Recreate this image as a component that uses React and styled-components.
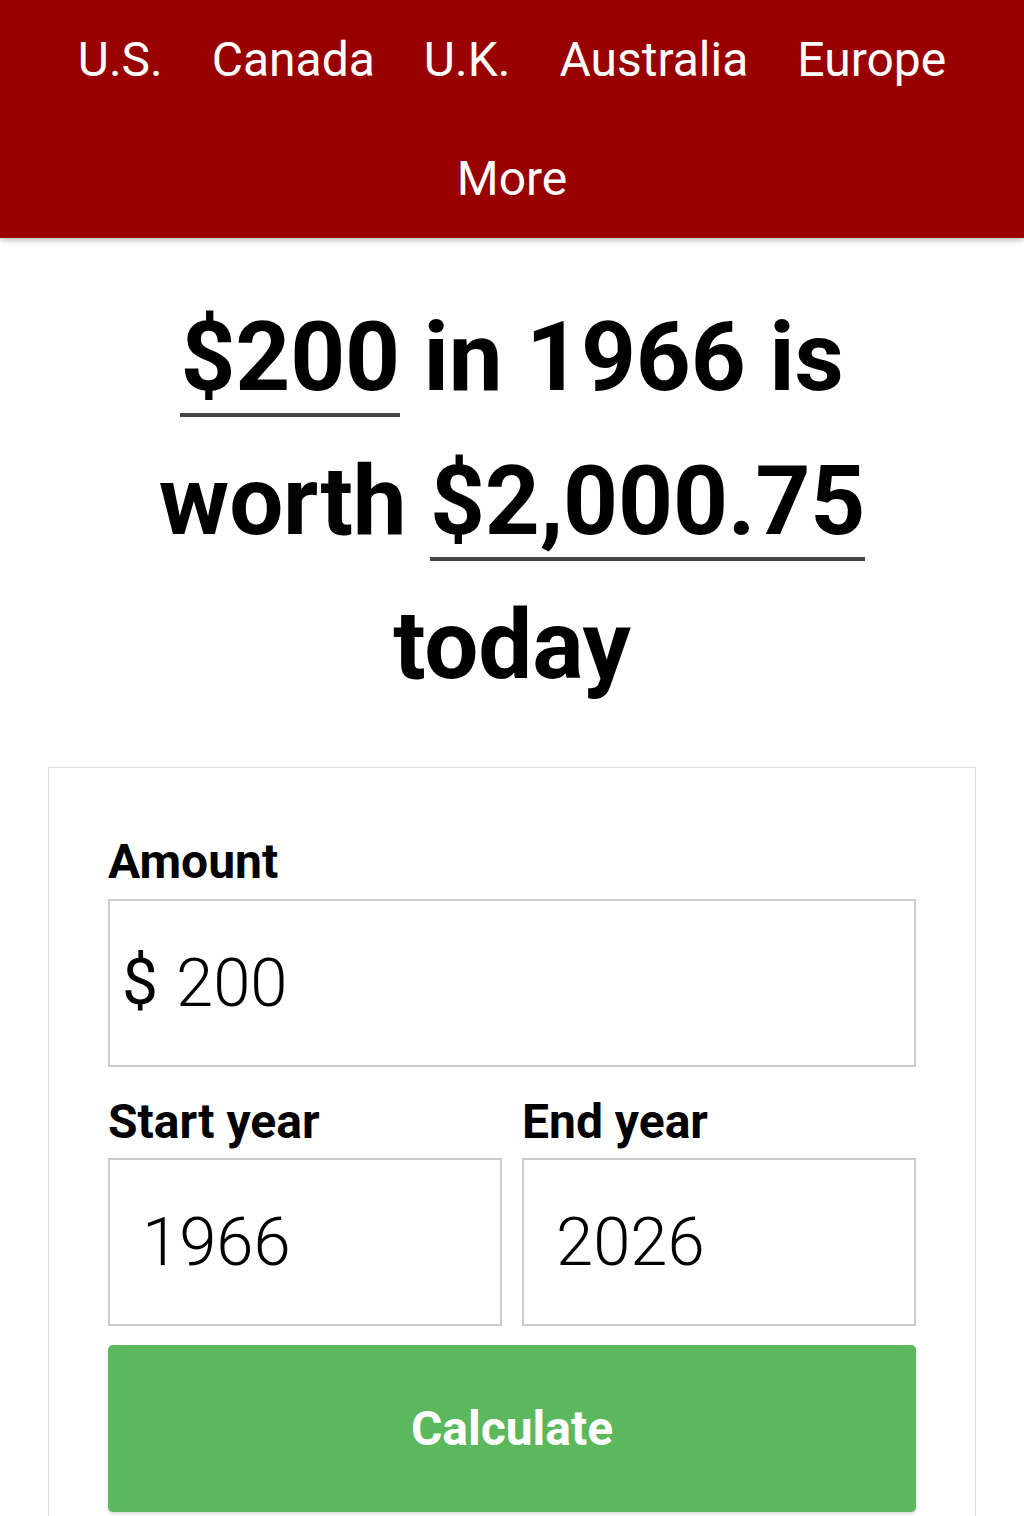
import React from "react"
import styled, { createGlobalStyle } from "styled-components"

const GlobalStyle = createGlobalStyle`
  html, body {
    margin: 0;
    padding: 0;
    background: #fff;
    font-family: Roboto, "Liberation Sans", sans-serif;
    color: #000;
  }
  * {
    box-sizing: border-box;
  }
`

const NavBar = styled.nav`
  background: #990000;
  box-shadow: 0 2px 6px rgba(0, 0, 0, 0.28);
  position: relative;
  z-index: 1;
`

const NavList = styled.ul`
  list-style: none;
  margin: 0;
  padding: 0 28px;
  display: flex;
  flex-wrap: wrap;
  justify-content: center;
`

const NavItem = styled.li`
  a {
    display: block;
    padding: 0 24.5px;
    line-height: 119px;
    font-size: 48px;
    font-weight: 400;
    color: #fff;
    text-decoration: none;
  }
`

const Headline = styled.h1`
  margin: 47px 0 0;
  padding: 0 100px;
  text-align: center;
  font-size: 96px;
  line-height: 144px;
  font-weight: 700;
  letter-spacing: -0.2px;
`

const Amount = styled.span`
  border-bottom: 4px solid #444;
`

const Card = styled.section`
  margin: 50px 48px 0;
  border: 1px solid #ddd;
  border-bottom: none;
  padding: 65px 59px 40px;
`

const Label = styled.label`
  display: block;
  font-size: 48px;
  line-height: 57.6px;
  font-weight: 700;
  margin-bottom: 8px;
`

const InputBox = styled.div`
  display: flex;
  align-items: center;
  height: 168px;
  border: 2px solid #ccc;
  padding: ${p => (p.$prefixed ? "0 12px" : "0 32px")};
  font-size: 67px;
  margin-bottom: ${p => p.$gap || 0}px;
`

const Prefix = styled.span`
  font-weight: 400;
  font-size: 64px;
  margin-right: 18px;
`

const Value = styled.span`
  font-weight: 300;
`

const Row = styled.div`
  display: grid;
  grid-template-columns: 1fr 1fr;
  column-gap: 20px;
`

const Button = styled.button`
  display: block;
  width: 100%;
  height: 167px;
  margin-top: 19px;
  border: none;
  border-radius: 5px;
  background: #5cb85c;
  box-shadow: 0 2px 3px rgba(0, 0, 0, 0.15);
  color: #fff;
  font-family: Roboto, "Liberation Sans", sans-serif;
  font-size: 48px;
  font-weight: 700;
  cursor: pointer;
`

const countries = ["U.S.", "Canada", "U.K.", "Australia", "Europe", "More"]

const App = () => (
  <>
    <GlobalStyle />
    <NavBar>
      <NavList>
        {countries.map(c => (
          <NavItem key={c}>
            <a href="#">{c}</a>
          </NavItem>
        ))}
      </NavList>
    </NavBar>
    <Headline>
      <Amount>$200</Amount> in 1966 is worth <Amount>$2,000.75</Amount> today
    </Headline>
    <Card>
      <Label>Amount</Label>
      <InputBox $prefixed $gap={26}>
        <Prefix>$</Prefix>
        <Value>200</Value>
      </InputBox>
      <Row>
        <div>
          <Label>Start year</Label>
          <InputBox>
            <Value>1966</Value>
          </InputBox>
        </div>
        <div>
          <Label>End year</Label>
          <InputBox>
            <Value>2026</Value>
          </InputBox>
        </div>
      </Row>
      <Button>Calculate</Button>
    </Card>
  </>
)

export default App
